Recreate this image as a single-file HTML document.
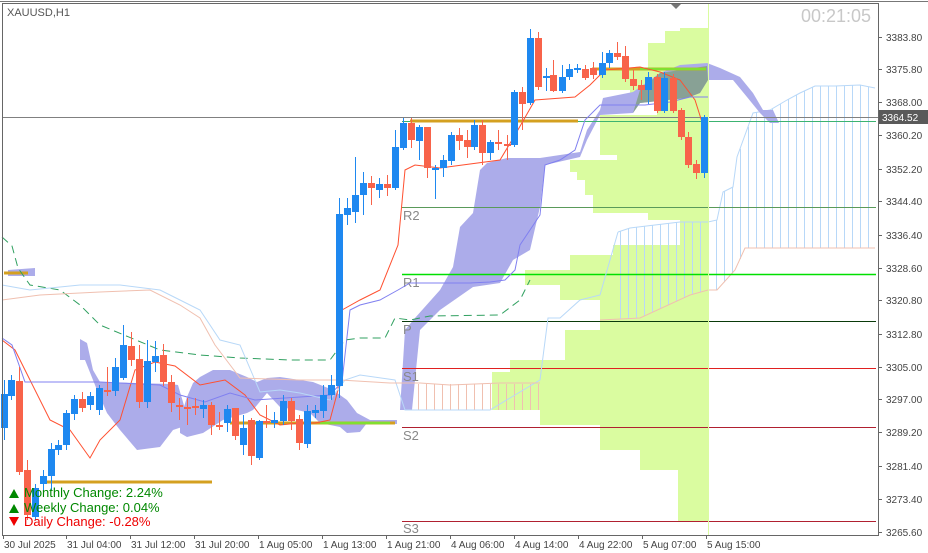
<!DOCTYPE html>
<html><head><meta charset="utf-8"><style>
body{margin:0;background:#fff;width:928px;height:553px;overflow:hidden;font-family:"Liberation Sans",sans-serif}
svg{display:block}
text{font-family:"Liberation Sans",sans-serif}
</style></head><body>
<svg id="s" width="928" height="553" viewBox="0 0 928 553" xmlns="http://www.w3.org/2000/svg">
<rect width="928" height="553" fill="#fff"/>
<line x1="0" y1="1.5" x2="928" y2="1.5" stroke="#777" stroke-width="1"/>
<!-- volume profile -->
<polygon fill="#dafca0" points="708,28 680,28 680,31 665,31 665,43 648,43 648,70 600,70 600,90 630,90 630,100 657,100 657,115 600,115 600,155 617,155 617,160 570,160 570,172 577,172 577,180 585,180 585,195 593,195 593,213 648,213 648,220 680,220 680,245 613,245 613,255 570,255 570,270 525,270 525,285 560,285 560,300 600,300 600,330 565,330 565,360 510,360 510,372 492,372 492,410 540,410 540,425 600,425 600,450 640,450 640,470 678,470 678,521 708,521"/>
<g id="hatch" stroke="#b8d8f8" stroke-width="1"></g>
<polyline fill="none" stroke="#b8d8f8" points="618,232 630,228 680,222 708,222 717,220 723,192 733,187 737,157 753,113 770,110 787,100 800,93 815,86 835,86 860,85 875,88"/>
<polyline fill="none" stroke="#f0c0b0" points="600,320 640,318 690,295 708,290 717,290 735,270 745,248 875,248"/>
<!-- purple clouds -->
<g fill="#acacea">
<polygon points="400,410 405,330 415,318 440,290 453,267 460,227 473,213 480,170 487,163 507,158 540,158 560,155 580,152 587,130 600,110 603,98 633,92 660,73 680,65 707,63 720,68 740,77 753,93 763,110 773,110 779,123 770,123 760,113 747,97 733,80 708,80 700,93 687,98 640,103 633,113 600,115 587,140 580,157 545,165 540,207 530,250 513,260 500,283 473,287 440,310 420,330 412,410"/>
<polygon points="80,339 87,343 93,370 100,382 170,384 178,385 183,402 188,420 188,425 173,430 160,447 137,450 120,430 107,413 97,390 85,360 80,360"/>
<polygon points="187,397 193,383 200,377 213,370 230,370 247,377 257,382 267,378 280,377 313,382 333,390 347,400 357,413 370,420 397,420 397,424 367,423 360,432 347,433 340,427 320,423 310,413 297,410 280,407 267,393 253,410 247,413 223,420 203,433 187,437 180,433 180,420"/>
<polygon points="8,270 35,268 35,276 8,276"/>
</g>
<polygon fill="#7f9f7f" opacity=".8" points="633,113 640,90 660,73 707,66 708,80 700,93 687,98 640,103"/>
<!-- hlines -->
<line x1="2" y1="117.5" x2="878" y2="117.5" stroke="#808080"/>
<line x1="402" y1="121.5" x2="876" y2="121.5" stroke="#3cb371"/>
<line x1="402" y1="207.5" x2="876" y2="207.5" stroke="#5a9a5a"/>
<line x1="402" y1="274.5" x2="876" y2="274.5" stroke="#00e000" stroke-width="1.5"/>
<line x1="402" y1="321.5" x2="876" y2="321.5" stroke="#0a3a0a"/>
<line x1="402" y1="368.5" x2="876" y2="368.5" stroke="#e02020"/>
<line x1="402" y1="427.5" x2="876" y2="427.5" stroke="#b02030"/>
<line x1="402" y1="521.5" x2="876" y2="521.5" stroke="#b02030"/>
<line x1="708.5" y1="3" x2="708.5" y2="535" stroke="#dafca0"/>
<g fill="#888" font-size="13">
<text x="403" y="220">R2</text><text x="403" y="287">R1</text><text x="403" y="334">P</text><text x="403" y="381">S1</text><text x="403" y="440">S2</text><text x="403" y="533">S3</text>
</g>
<g stroke="#d4a020" stroke-width="3">
<line x1="410" y1="121" x2="578" y2="121"/>
<line x1="592" y1="69" x2="706" y2="69"/>
<line x1="40" y1="482" x2="212" y2="482"/>
<line x1="230" y1="423" x2="395" y2="423"/>
<line x1="4" y1="273" x2="28" y2="273"/>
</g>
<line x1="320" y1="423" x2="390" y2="423" stroke="#80e030" stroke-width="2.5"/>
<line x1="640" y1="69" x2="706" y2="69" stroke="#80e030" stroke-width="2.5"/>
<polyline fill="none" stroke="#ff5030" points="2,340 15,350 30,380 50,420 70,430 90,458 100,440 120,420 135,370 155,362 175,366 200,385 225,380 245,395 260,415 280,425 300,423 315,423 330,420 338,390 342,310 360,300 380,290 398,245 405,170 415,165 440,168 500,160 515,135 535,100 575,97 590,85 605,70 640,67 660,72 680,80 695,100 702,122"/>
<polyline fill="none" stroke="#8080f0" points="2,338 12,345 25,382 100,382 160,385 180,395 205,402 230,393 255,400 300,397 330,395 342,382 350,310 360,305 380,300 398,290 410,283 470,283 490,282 505,280 515,270 520,245 540,215 545,165 560,160 575,150 585,120 600,105 645,105 670,102 690,97 708,97"/>
<polyline fill="none" stroke="#30a060" stroke-dasharray="8,5" points="2,237 12,246 18,268 30,285 60,290 80,305 100,325 160,350 200,355 240,358 290,360 330,360 345,340 360,338 385,338 395,318 410,320 430,316 500,315 520,300 530,280"/>
<polyline fill="none" stroke="#b8d8f8" points="2,285 30,290 80,285 120,285 160,290 180,300 200,310 220,340 240,345 260,392 280,390 300,393 330,400 345,380 360,375 395,380 405,410 440,410 490,410 515,395 540,380 548,318 560,318 580,300 600,295 610,260 618,232"/>
<polyline fill="none" stroke="#f0c0b0" points="2,300 40,295 100,292 150,290 180,305 200,318 215,345 240,378 300,380 340,380 390,383 420,383 450,385 500,383 540,383"/>
<g id="c"></g>
<rect x="878" y="110" width="50" height="14" fill="#5a5a5a"/>
<text x="882" y="121" fill="#fff" font-size="10">3364.52</text>
<line x1="878.5" y1="3" x2="878.5" y2="536" stroke="#666"/>
<line x1="2.5" y1="3" x2="2.5" y2="536" stroke="#666"/>
<line x1="2" y1="3.5" x2="878" y2="3.5" stroke="#666"/>
<line x1="2" y1="535.5" x2="878" y2="535.5" stroke="#666"/>
<polygon points="671,4 681,4 676,9" fill="#777"/>
<text x="7" y="16" fill="#555" font-size="11">XAUUSD,H1</text>
<text x="801" y="22" fill="#c8c8c8" font-size="18">00:21:05</text>
<g fill="#444" font-size="10" id="ax"></g>
<g font-size="13">
<polygon points="9,498 14,489 19,498" fill="#080"/><text x="24" y="497" fill="#080">Monthly Change: 2.24%</text>
<polygon points="9,513 14,504 19,513" fill="#080"/><text x="24" y="512" fill="#080">Weekly Change: 0.04%</text>
<polygon points="9,517 19,517 14,526" fill="#e00"/><text x="24" y="526" fill="#e00">Daily Change: -0.28%</text>
</g>
</svg>
<script>
var ns="http://www.w3.org/2000/svg",g=document.getElementById('c');
function el(p,t,a){var e=document.createElementNS(ns,t);for(var k in a)e.setAttribute(k,a[k]);p.appendChild(e);return e}
var C=[[4,394,428,380,440,1],[11,380,396,375,400,1],[19,381,472,367,475,0],[27,470,515,460,520,0],[35,488,517,484,520,1],[43,476,484,470,490,1],[51,449,476,443,490,1],[58,445,450,440,455,1],[66,413,445,410,450,1],[74,399,414,395,420,1],[82,399,408,392,412,0],[90,396,405,392,410,1],[99,388,410,385,415,1],[107,390,392,367,396,0],[115,367,391,358,396,1],[123,345,378,325,380,1],[131,346,360,332,366,0],[139,359,402,345,408,0],[147,361,402,340,408,1],[155,356,362,341,372,1],[163,355,382,344,386,0],[171,382,403,375,412,0],[179,405,407,398,420,0],[187,407,409,398,425,0],[195,406,408,398,415,0],[203,405,409,400,418,1],[211,405,425,402,435,0],[219,425,427,412,430,0],[227,409,423,405,432,1],[235,408,436,408,440,0],[243,428,445,415,455,1],[251,420,456,418,465,0],[259,421,458,420,460,1],[266,421,423,405,428,0],[274,420,423,412,428,1],[283,401,421,395,425,1],[291,401,421,398,430,0],[299,419,443,415,450,0],[307,411,444,405,448,1],[315,410,413,405,418,1],[323,395,411,385,418,1],[331,385,395,375,400,1],[339,214,386,198,398,1],[347,208,215,198,225,1],[355,195,212,157,223,1],[363,183,195,172,215,1],[371,183,188,176,205,0],[379,184,190,178,198,1],[387,184,188,175,196,0],[395,147,188,130,190,1],[403,123,148,118,150,1],[411,123,140,118,148,0],[419,127,141,125,160,1],[427,127,168,127,178,0],[435,168,170,165,199,1],[443,160,168,155,177,1],[451,135,161,132,165,1],[459,135,141,128,150,0],[467,140,147,130,158,0],[474,125,147,120,150,1],[482,125,153,120,165,0],[490,142,153,140,160,1],[498,142,144,130,150,0],[507,144,145,135,160,0],[514,92,145,90,147,1],[522,92,104,87,130,0],[530,38,103,29,105,1],[538,38,87,32,90,0],[546,76,78,68,91,1],[553,75,91,60,92,0],[562,77,91,65,93,1],[569,69,77,64,80,1],[577,68,70,64,73,1],[585,69,78,65,80,0],[593,68,75,62,79,0],[602,63,75,52,78,1],[609,53,63,50,68,1],[617,53,57,42,60,0],[625,56,79,46,82,0],[633,79,86,70,90,0],[641,85,90,80,100,0],[648,77,90,72,104,1],[657,77,111,74,113,0],[664,78,111,72,113,1],[673,78,111,74,113,0],[681,110,137,108,140,0],[688,137,165,132,168,0],[696,164,173,160,179,0],[704,117,173,115,178,1]];
C.forEach(function(c){var col=c[5]?'#1e88f0':'#f8634a';el(g,'line',{x1:c[0]+.5,x2:c[0]+.5,y1:c[3],y2:c[4],stroke:col});el(g,'rect',{x:c[0]-3,y:c[1],width:7,height:Math.max(2,c[2]-c[1]),fill:col});});
function interp(pts,x){for(var i=0;i<pts.length-1;i++){if(x>=pts[i][0]&&x<=pts[i+1][0]){var t=(x-pts[i][0])/((pts[i+1][0]-pts[i][0])||1);return pts[i][1]+t*(pts[i+1][1]-pts[i][1]);}}return pts[pts.length-1][1];}
var U=[[618,232],[630,228],[680,222],[708,222],[717,220],[723,192],[733,187],[737,157],[753,113],[770,110],[787,100],[800,93],[815,86],[835,86],[860,85],[875,88]];
var L=[[600,320],[640,318],[690,295],[708,290],[717,290],[735,270],[745,248],[875,248]];
var h=document.getElementById('hatch');
for(var x=620;x<875;x+=8){var a=interp(U,x),b=interp(L,x);el(h,'line',{x1:x+.5,x2:x+.5,y1:a,y2:b});}
var h2=el(document.getElementById('s'),'g',{stroke:'#f0c0b0'});
document.getElementById('s').insertBefore(h2,h);
for(var x=410;x<540;x+=8){el(h2,'line',{x1:x+.5,x2:x+.5,y1:384,y2:410});}
var ax=document.getElementById('ax');
var P=[["3383.80",37],["3375.80",69],["3368.00",102],["3360.20",135],["3352.20",169],["3344.40",201],["3336.40",235],["3328.60",268],["3320.80",300],["3312.80",334],["3305.00",367],["3297.00",399],["3289.20",432],["3281.40",466],["3273.40",499],["3265.60",532]];
P.forEach(function(p){el(ax,'line',{x1:878,x2:882,y1:p[1]+.5,y2:p[1]+.5,stroke:'#666'});var t=el(ax,'text',{x:886,y:p[1]+4});t.textContent=p[0];});
var T=[["30 Jul 2025",3],["31 Jul 04:00",66],["31 Jul 12:00",130],["31 Jul 20:00",194],["1 Aug 05:00",258],["1 Aug 13:00",322],["1 Aug 21:00",386],["4 Aug 06:00",450],["4 Aug 14:00",514],["4 Aug 22:00",578],["5 Aug 07:00",642],["5 Aug 15:00",706]];
T.forEach(function(p){el(ax,'line',{x1:p[1]+.5,x2:p[1]+.5,y1:535,y2:539,stroke:'#666'});var t=el(ax,'text',{x:p[1]+1,y:548});t.textContent=p[0];});
</script>
</body></html>
